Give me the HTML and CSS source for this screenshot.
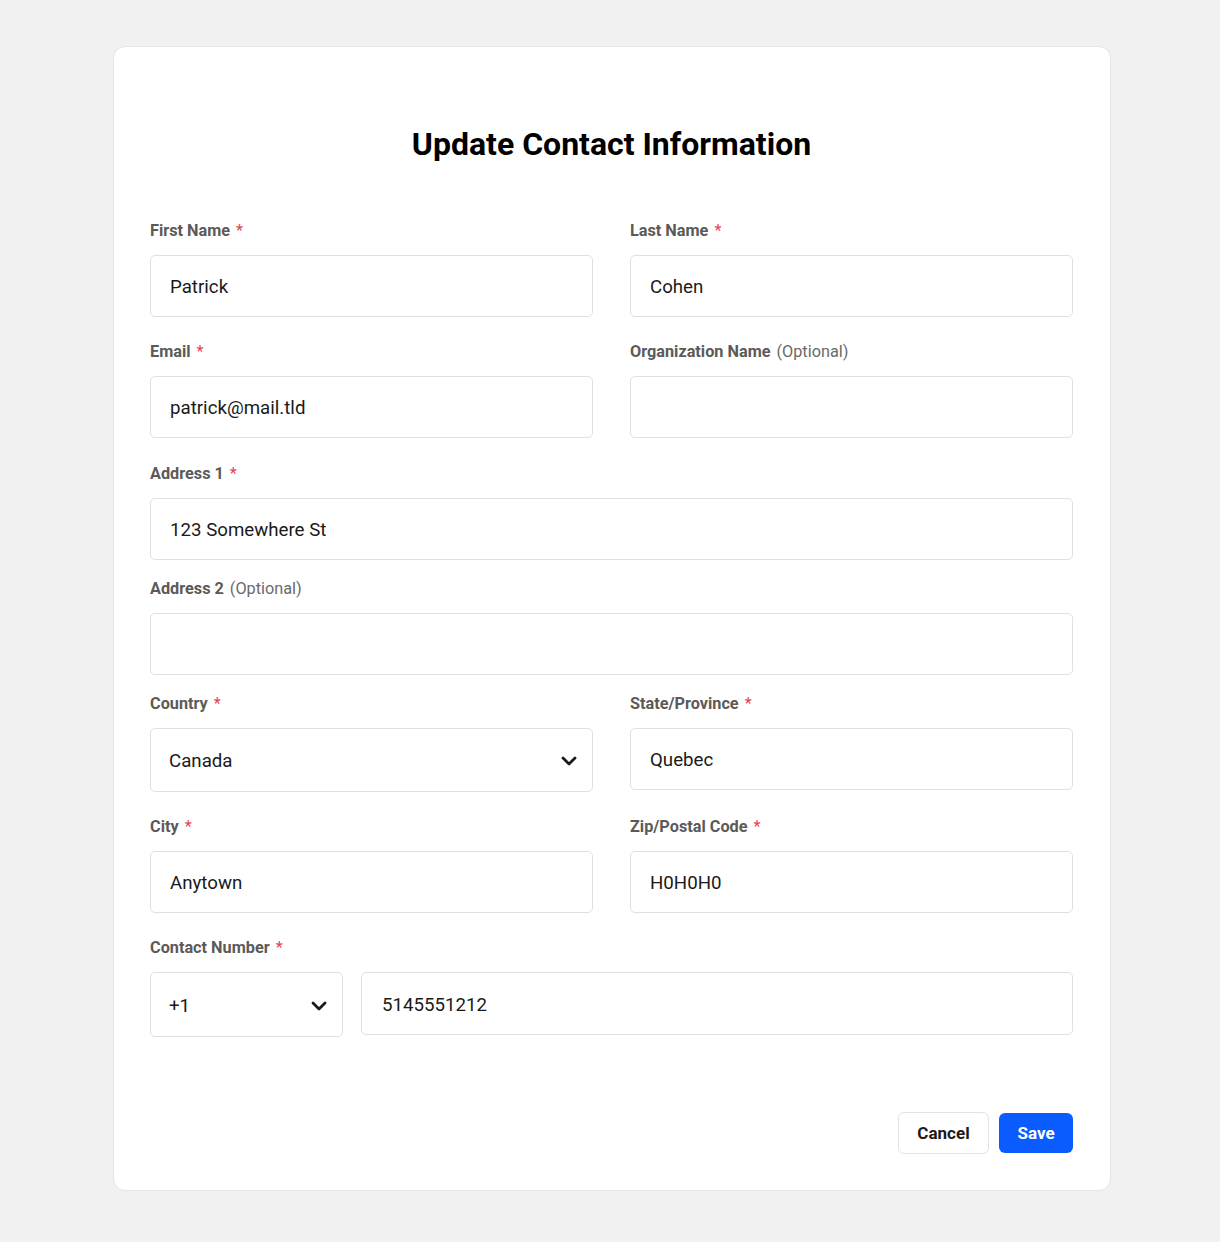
FILE: index.html
```html
<!DOCTYPE html>
<html lang="en">
<head>
<meta charset="utf-8">
<title>Update Contact Information</title>
<link rel="stylesheet" href="styles.css">
</head>
<body>
<div class="card">
  <h1 class="title">Update Contact Information</h1>
  <form class="form">
    <div class="row two">
      <div class="field">
        <label class="label">First Name<span class="req">*</span></label>
        <div class="input">Patrick</div>
      </div>
      <div class="field">
        <label class="label">Last Name<span class="req">*</span></label>
        <div class="input">Cohen</div>
      </div>
    </div>
    <div class="row two">
      <div class="field">
        <label class="label">Email<span class="req">*</span></label>
        <div class="input">patrick@mail.tld</div>
      </div>
      <div class="field">
        <label class="label">Organization Name<span class="opt">(Optional)</span></label>
        <div class="input"></div>
      </div>
    </div>
    <div class="row one">
      <div class="field">
        <label class="label">Address 1<span class="req">*</span></label>
        <div class="input">123 Somewhere St</div>
      </div>
    </div>
    <div class="row one">
      <div class="field">
        <label class="label">Address 2<span class="opt">(Optional)</span></label>
        <div class="input"></div>
      </div>
    </div>
    <div class="row two">
      <div class="field">
        <label class="label">Country<span class="req">*</span></label>
        <div class="select">
          <span>Canada</span>
          <svg class="chev" width="16" height="10" viewBox="0 0 16 10"><path d="M2 2 L8 8 L14 2" fill="none" stroke="#1a1a1a" stroke-width="2.8" stroke-linecap="round" stroke-linejoin="round"/></svg>
        </div>
      </div>
      <div class="field">
        <label class="label">State/Province<span class="req">*</span></label>
        <div class="input">Quebec</div>
      </div>
    </div>
    <div class="row two">
      <div class="field">
        <label class="label">City<span class="req">*</span></label>
        <div class="input">Anytown</div>
      </div>
      <div class="field">
        <label class="label">Zip/Postal Code<span class="req">*</span></label>
        <div class="input">H0H0H0</div>
      </div>
    </div>
    <div class="row one last">
      <div class="field">
        <label class="label">Contact Number<span class="req">*</span></label>
        <div class="phone">
          <div class="select code">
            <span>+1</span>
            <svg class="chev" width="16" height="10" viewBox="0 0 16 10"><path d="M2 2 L8 8 L14 2" fill="none" stroke="#1a1a1a" stroke-width="2.8" stroke-linecap="round" stroke-linejoin="round"/></svg>
          </div>
          <div class="input number">5145551212</div>
        </div>
      </div>
    </div>
    <div class="actions">
      <button type="button" class="btn cancel">Cancel</button>
      <button type="button" class="btn save">Save</button>
    </div>
  </form>
</div>
</body>
</html>
```
FILE: styles.css
```css
* { box-sizing: border-box; }
html, body { margin: 0; padding: 0; }
body {
  background: #f1f1f1;
  font-family: Roboto, "Liberation Sans", Arial, sans-serif;
  color: #1a1a1a;
  padding: 46px 0 50px 113px;
}
.card {
  width: 998px;
  background: #fff;
  border: 1px solid #e4e4e4;
  border-radius: 12px;
  padding: 78px 37px 36px 36px;
}
.title {
  margin: 0;
  text-align: center;
  font-size: 32px;
  line-height: 38px;
  font-weight: 700;
  color: #000;
}
.form { margin-top: 56px; }
.row { display: grid; column-gap: 37px; }
.row.two { grid-template-columns: 1fr 1fr; margin-bottom: 23.3px; }
.row.one { grid-template-columns: 1fr; margin-bottom: 17px; }
.row.last { margin-bottom: 0; }
.field { display: flex; flex-direction: column; }
.label {
  font-size: 16.25px;
  line-height: 24px;
  font-weight: 700;
  color: #5c5a58;
  margin-bottom: 12px;
}
.req { color: #e8424f; font-weight: 400; margin-left: 6px; }
.opt { color: #6a6a6a; font-weight: 400; margin-left: 6px; }
.input, .select {
  height: 62px;
  border: 1px solid #e0e0e0;
  border-radius: 5px;
  font-size: 18.7px;
  color: #1a1a1a;
  display: flex;
  align-items: center;
  padding-left: 19px;
  padding-top: 2px;
  background: #fff;
}
.select {
  height: 64px;
  padding-left: 18px;
  padding-right: 15px;
  justify-content: space-between;
}
.chev { display: block; }
.phone { display: flex; gap: 18px; align-items: flex-start; }
.code { width: 193px; flex: none; height: 65px; padding-right: 15px; }
.number { flex: 1; height: 63px; padding-left: 20px; }
.actions {
  display: flex;
  justify-content: flex-end;
  align-items: center;
  gap: 10px;
  margin-top: 75px;
}
.btn {
  font-family: inherit;
  font-size: 17px;
  font-weight: 700;
  border-radius: 6px;
  cursor: pointer;
}
.cancel {
  width: 91px;
  height: 42px;
  background: #fff;
  border: 1px solid #e2e2e2;
  color: #1a1a1a;
}
.save {
  width: 74px;
  height: 40px;
  background: #0a5cff;
  border: none;
  color: #fff;
}
```
